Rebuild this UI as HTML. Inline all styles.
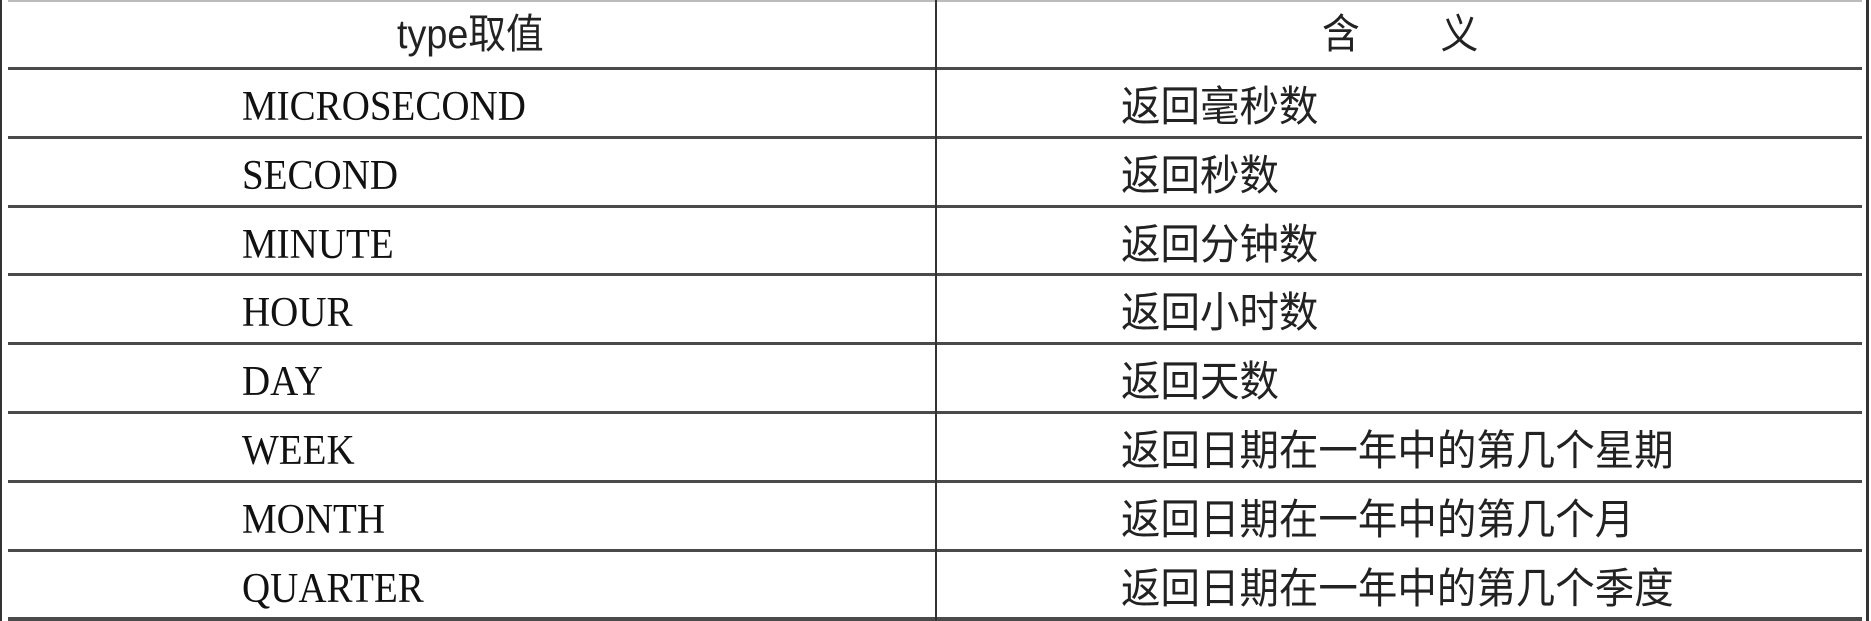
<!DOCTYPE html>
<html><head><meta charset="utf-8"><style>
html,body{margin:0;padding:0;background:#fff;}
body{width:1871px;height:621px;position:relative;overflow:hidden;}
.h{position:absolute;left:8px;width:1854px;height:3px;background:#4a4a4a;}
.v{position:absolute;top:0;width:2px;height:621px;background:#333;}
.t{position:absolute;font-family:"Liberation Serif","Noto Serif CJK SC",serif;font-size:39px;color:#111;line-height:1;white-space:nowrap;transform:scaleY(1.08);transform-origin:left center;}
.c{position:absolute;font-family:"Liberation Sans","Noto Sans CJK SC",sans-serif;font-size:42px;color:#222;line-height:1;white-space:nowrap;transform:scaleX(0.94);transform-origin:left center;}
</style></head><body>
<div class="h" style="top:0;height:2px;background:#bbb"></div>
<div class="h" style="top:67px"></div>
<div class="h" style="top:136px"></div>
<div class="h" style="top:205px"></div>
<div class="h" style="top:273px"></div>
<div class="h" style="top:342px"></div>
<div class="h" style="top:411px"></div>
<div class="h" style="top:480px"></div>
<div class="h" style="top:549px"></div>
<div class="h" style="top:617px;height:4px"></div>
<div class="v" style="left:0"></div>
<div class="v" style="left:935px"></div>
<div class="v" style="left:1866px;width:3px"></div>

<div class="c" style="left:397px;top:14px;font-size:41px;transform:scaleX(0.92)">type取值</div>
<div class="c" style="left:1322px;top:14px;font-size:41px;transform:scaleX(0.92)">含<span style="display:inline-block;width:88px"></span>义</div>

<div class="t" style="left:242px;top:87px">MICROSECOND</div>
<div class="t" style="left:242px;top:156px">SECOND</div>
<div class="t" style="left:242px;top:225px">MINUTE</div>
<div class="t" style="left:242px;top:293px">HOUR</div>
<div class="t" style="left:242px;top:362px">DAY</div>
<div class="t" style="left:242px;top:431px">WEEK</div>
<div class="t" style="left:242px;top:500px">MONTH</div>
<div class="t" style="left:242px;top:569px">QUARTER</div>

<div class="c" style="left:1121px;top:86px">返回毫秒数</div>
<div class="c" style="left:1121px;top:155px">返回秒数</div>
<div class="c" style="left:1121px;top:224px">返回分钟数</div>
<div class="c" style="left:1121px;top:292px">返回小时数</div>
<div class="c" style="left:1121px;top:361px">返回天数</div>
<div class="c" style="left:1121px;top:430px">返回日期在一年中的第几个星期</div>
<div class="c" style="left:1121px;top:499px">返回日期在一年中的第几个月</div>
<div class="c" style="left:1121px;top:568px">返回日期在一年中的第几个季度</div>
</body></html>
